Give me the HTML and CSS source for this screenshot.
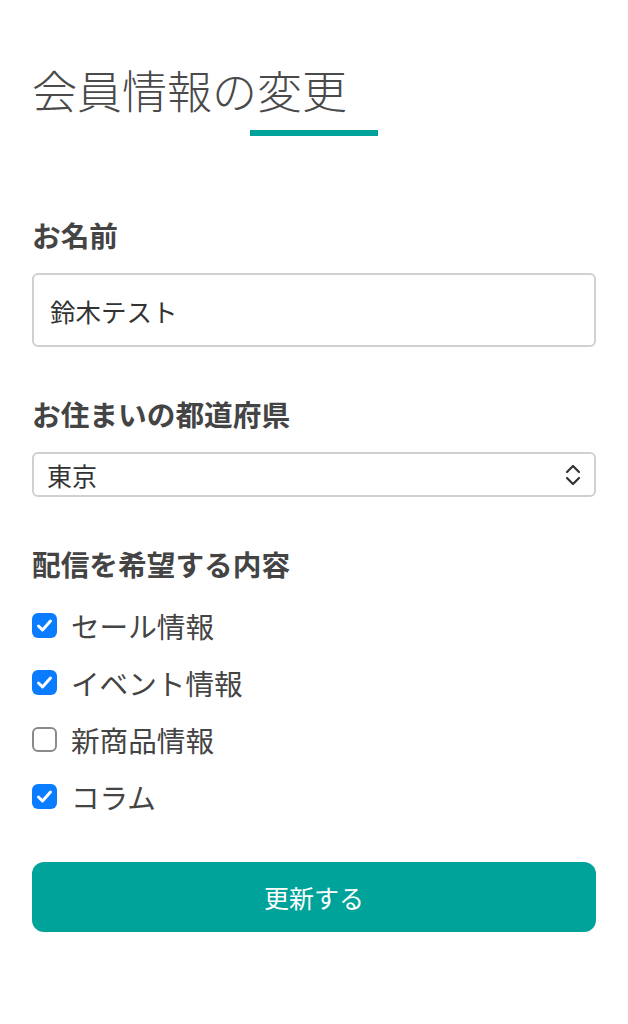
FILE: index.html
```html
<!DOCTYPE html>
<html lang="ja">
<head>
  <meta charset="UTF-8" />
  <title>会員情報の変更</title>
  <link rel="stylesheet" href="styles.css">
</head>
<body>

<div class="page">
  <!-- Заголовок -->
  <h1 class="title">会員情報の変更</h1>
  <div class="title-bar"></div>

  <form class="form">
    <div class="field field-name">
      <label class="label">お名前</label>
      <div class="input">鈴木テスト</div>
    </div>

    <div class="field">
      <label class="label">お住まいの都道府県</label>
      <div class="select">
        <span>東京</span>
        <svg class="select-arrows" width="16" height="24" viewBox="0 0 16 24">
          <path d="M2 9 L8 3 L14 9" fill="none" stroke="#333" stroke-width="2.2" stroke-linecap="round" stroke-linejoin="round"/>
          <path d="M2 15 L8 21 L14 15" fill="none" stroke="#333" stroke-width="2.2" stroke-linecap="round" stroke-linejoin="round"/>
        </svg>
      </div>
    </div>

    <div class="field">
      <label class="label">配信を希望する内容</label>
      <ul class="checks">
        <li class="check">
          <span class="box checked">
            <svg width="25" height="25" viewBox="0 0 25 25"><path d="M6.5 13 L10.5 17 L18.5 8" fill="none" stroke="#fff" stroke-width="3" stroke-linecap="round" stroke-linejoin="round"/></svg>
          </span>
          セール情報
        </li>
        <li class="check">
          <span class="box checked">
            <svg width="25" height="25" viewBox="0 0 25 25"><path d="M6.5 13 L10.5 17 L18.5 8" fill="none" stroke="#fff" stroke-width="3" stroke-linecap="round" stroke-linejoin="round"/></svg>
          </span>
          イベント情報
        </li>
        <li class="check">
          <span class="box"></span>
          新商品情報
        </li>
        <li class="check">
          <span class="box checked">
            <svg width="25" height="25" viewBox="0 0 25 25"><path d="M6.5 13 L10.5 17 L18.5 8" fill="none" stroke="#fff" stroke-width="3" stroke-linecap="round" stroke-linejoin="round"/></svg>
          </span>
          コラム
        </li>
      </ul>
    </div>

    <button type="button" class="submit">更新する</button>
  </form>
</div>

</body>
</html>
```

FILE: styles.css
```css
/* Общие стили */
body {
  margin: 0;
  padding: 0;
  background: #fff;
  color: #444;
  font-family: "Noto Sans CJK JP", "Noto Sans", sans-serif;
}

.page {
  padding: 60px 32px 60px;
}

/* Заголовок */
.title {
  margin: 0;
  font-size: 45px;
  line-height: 60px;
  font-weight: 300;
  color: #4a4a4a;
}

.title-bar {
  width: 128px;
  height: 6px;
  margin: 10px 0 0 218px;
  background: #00a399;
}

.form {
  margin-top: 79px;
}

.field {
  margin-bottom: 47px;
}

.label {
  display: block;
  font-size: 28.7px;
  line-height: 40px;
  font-weight: 700;
  color: #444;
}

/* Поле ввода */
.input {
  margin-top: 18px;
  box-sizing: border-box;
  height: 74px;
  padding: 0 16px;
  border: 2px solid #d0d0d0;
  border-radius: 6px;
  display: flex;
  align-items: center;
  font-size: 25.5px;
  color: #333;
}

/* Выпадающий список */
.select {
  margin-top: 18px;
  height: 45px;
  box-sizing: border-box;
  padding: 0 13px;
  border: 2px solid #d0d0d0;
  border-radius: 6px;
  display: flex;
  align-items: center;
  justify-content: space-between;
  font-size: 25px;
  color: #333;
}

/* Чекбоксы */
.checks {
  list-style: none;
  margin: 13px 0 0;
  padding: 0;
}

.check {
  height: 57px;
  display: flex;
  align-items: center;
  gap: 14px;
  font-size: 28.6px;
  color: #444;
}

.box {
  width: 25px;
  height: 25px;
  box-sizing: border-box;
  border: 2px solid #8a8a8a;
  border-radius: 6px;
  background: #fff;
  display: flex;
}

.box.checked {
  border: none;
  background: #0a7cff;
}

/* Кнопка */
.submit {
  display: block;
  width: 100%;
  height: 70px;
  margin-top: -10px;
  border: none;
  border-radius: 12px;
  background: #00a399;
  color: #fff;
  font-family: inherit;
  font-size: 25px;
  cursor: pointer;
}
```
